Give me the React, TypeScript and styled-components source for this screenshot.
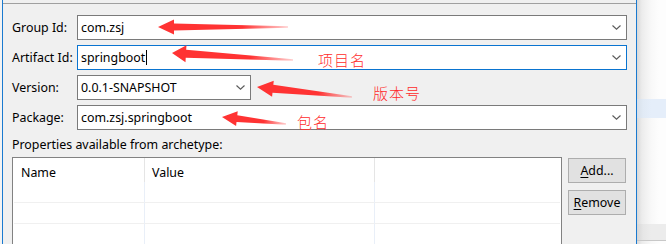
import React from 'react';
import styled, { createGlobalStyle } from 'styled-components';

const GlobalStyle = createGlobalStyle`
  html, body {
    margin: 0;
    padding: 0;
    background: #f3f3f3;
  }
  body {
    font-family: "Noto Sans", "Open Sans", sans-serif;
    font-size: 12.4px;
    color: #000;
  }
`;

const Page = styled.div`
  position: relative;
  width: 666px;
  height: 244px;
  overflow: hidden;
  display: flex;
  padding-left: 2px;
  box-sizing: border-box;
  background: #f3f3f3;
`;

const Dialog = styled.div`
  width: 635px;
  flex: none;
  display: flex;
  flex-direction: column;
  background: #f0f0f0;
  border-left: 1px solid #1a7ad0;
  border-right: 1px solid #1a7ad0;
  box-sizing: border-box;
`;

const TopRule = styled.div`
  height: 3px;
  border-bottom: 1px solid #a0a0a0;
  flex: none;
`;

const Content = styled.div`
  padding: 11px 9px 0 9px;
  display: flex;
  flex-direction: column;
`;

const Form = styled.div`
  display: grid;
  grid-template-columns: 65px 1fr;
  row-gap: 5px;
  align-items: center;
`;

const Label = styled.div`
  line-height: 16px;
  white-space: nowrap;
`;

const Combo = styled.div<{ $focused?: boolean; $width?: number }>`
  height: 25px;
  box-sizing: border-box;
  width: ${p => (p.$width ? `${p.$width}px` : '100%')};
  background: #fff;
  border: 1px solid ${p => (p.$focused ? '#0a74d0' : '#7a7a7a')};
  display: flex;
  align-items: center;
  padding: 0 5px 0 3px;
  white-space: nowrap;
`;

const ComboText = styled.span`
  flex: 1;
  display: flex;
  align-items: center;
`;

const Caret = styled.span`
  display: inline-block;
  width: 1px;
  height: 15px;
  background: #000;
  margin-left: 1px;
`;

const Chevron = () => (
  <svg width="9" height="5" viewBox="0 0 9 5">
    <polyline points="0.5,0.5 4.5,4.2 8.5,0.5" fill="none" stroke="#5a5a5a" strokeWidth="1.1" />
  </svg>
);

const SectionTitle = styled.div`
  margin-top: 7px;
  line-height: 16px;
`;

const TableArea = styled.div`
  margin-top: 4px;
  display: flex;
  gap: 6px;
`;

const Table = styled.div`
  width: 550px;
  height: 110px;
  box-sizing: border-box;
  background: #fff;
  border: 1px solid #828282;
  display: grid;
  grid-template-columns: 131px 230px 1fr;
  grid-template-rows: 24px repeat(4, 21px);
  padding: 0 1px;
`;

const HeadCell = styled.div<{ $divider?: boolean }>`
  display: flex;
  align-items: center;
  padding-left: 7px;
  padding-top: 4px;
  border-right: ${p => (p.$divider ? '1px solid #e5e5e5' : 'none')};
`;

const Cell = styled.div<{ $divider?: boolean }>`
  border-bottom: 1px solid #f0f0f0;
  border-right: ${p => (p.$divider ? '1px solid #e9eff8' : 'none')};
`;

const Buttons = styled.div`
  display: flex;
  flex-direction: column;
  gap: 7px;
  margin-top: 1px;
`;

const Button = styled.button`
  width: 58px;
  height: 25px;
  box-sizing: border-box;
  background: #e1e1e1;
  border: 1px solid #adadad;
  font-family: inherit;
  font-size: 12.4px;
  color: #000;
  padding: 0;
  u {
    text-underline-offset: 2px;
  }
`;

const RightPane = styled.div`
  flex: 1;
  display: flex;
  flex-direction: column;
  background: linear-gradient(90deg, #d9d9d9 0px, #ececec 5px, #f8f8f8 14px, #fdfdfd 22px);
`;

const Spacer = styled.div<{ $h: number }>`
  height: ${p => p.$h}px;
  flex: none;
`;

const HighlightBand = styled.div`
  height: 19px;
  flex: none;
  background: linear-gradient(90deg, #d7dfe9 0px, #e1eaf5 6px, #e5eefa 14px);
`;

const BottomBand = styled.div`
  height: 16px;
  flex: none;
  background: linear-gradient(90deg, #d6d6d6 0px, #e6e6e6 6px, #ececec 14px);
  border-bottom: 1px solid #c8c8c8;
`;

const Overlay = styled.svg`
  position: absolute;
  left: 0;
  top: 0;
  pointer-events: none;
`;

const Note = styled.div<{ $x: number; $y: number }>`
  position: absolute;
  left: ${p => p.$x}px;
  top: ${p => p.$y}px;
  font-family: "Noto Sans CJK SC", sans-serif;
  font-size: 15px;
  font-weight: 300;
  line-height: 18px;
  color: #ff2b2b;
  letter-spacing: 1px;
  pointer-events: none;
`;

type ArrowSpec = { tip: [number, number]; end: [number, number]; head?: number; half?: number; tail?: number };

const arrows: ArrowSpec[] = [
  { tip: [158, 27], end: [288, 27], head: 16, half: 7.5, tail: 3.5 },
  { tip: [172, 53], end: [293, 60], head: 14, half: 8.5, tail: 4 },
  { tip: [257, 87], end: [352, 97], head: 16, half: 8, tail: 4 },
  { tip: [222, 117], end: [286, 124], head: 15, half: 7.5, tail: 3.5 },
];

function arrowPoints(a: ArrowSpec) {
  const [tx, ty] = a.tip;
  const [ex, ey] = a.end;
  const head = a.head ?? 15;
  const half = a.half ?? 8;
  const tail = a.tail ?? 3.5;
  const dx = ex - tx;
  const dy = ey - ty;
  const len = Math.hypot(dx, dy);
  const ux = dx / len;
  const uy = dy / len;
  const nx = -uy;
  const ny = ux;
  const bx = tx + ux * head;
  const by = ty + uy * head;
  const pts = [
    [tx, ty],
    [bx + nx * half, by + ny * half],
    [bx + nx * tail, by + ny * tail],
    [ex + nx * 0.8, ey + ny * 0.8],
    [ex - nx * 0.8, ey - ny * 0.8],
    [bx - nx * tail, by - ny * tail],
    [bx - nx * half, by - ny * half],
  ];
  return pts.map(p => p.join(',')).join(' ');
}

const Arrows = () => (
  <Overlay width="666" height="244" viewBox="0 0 666 244">
    <defs>
      {arrows.map((a, i) => (
        <linearGradient
          key={i}
          id={`arrowFade${i}`}
          gradientUnits="userSpaceOnUse"
          x1={a.tip[0]}
          y1={a.tip[1]}
          x2={a.end[0]}
          y2={a.end[1]}
        >
          <stop offset="0" stopColor="#ff3333" stopOpacity="1" />
          <stop offset="0.65" stopColor="#ff3333" stopOpacity="1" />
          <stop offset="1" stopColor="#ff4040" stopOpacity="0.25" />
        </linearGradient>
      ))}
    </defs>
    {arrows.map((a, i) => (
      <polygon key={i} points={arrowPoints(a)} fill={`url(#arrowFade${i})`} />
    ))}
  </Overlay>
);

export default function App() {
  const rows = [0, 1, 2, 3];
  return (
    <>
      <GlobalStyle />
      <Page>
        <Dialog>
          <TopRule />
          <Content>
            <Form>
              <Label>Group Id:</Label>
              <Combo>
                <ComboText>com.zsj</ComboText>
                <Chevron />
              </Combo>
              <Label>Artifact Id:</Label>
              <Combo $focused>
                <ComboText>
                  springboot
                  <Caret />
                </ComboText>
                <Chevron />
              </Combo>
              <Label>Version:</Label>
              <Combo $width={174}>
                <ComboText>0.0.1-SNAPSHOT</ComboText>
                <Chevron />
              </Combo>
              <Label>Package:</Label>
              <Combo>
                <ComboText>com.zsj.springboot</ComboText>
                <Chevron />
              </Combo>
            </Form>
            <SectionTitle>Properties available from archetype:</SectionTitle>
            <TableArea>
              <Table>
                <HeadCell $divider>Name</HeadCell>
                <HeadCell $divider>Value</HeadCell>
                <HeadCell />
                {rows.map(r => (
                  <React.Fragment key={r}>
                    <Cell $divider />
                    <Cell $divider />
                    <Cell />
                  </React.Fragment>
                ))}
              </Table>
              <Buttons>
                <Button>
                  <u>A</u>dd...
                </Button>
                <Button>
                  <u>R</u>emove
                </Button>
              </Buttons>
            </TableArea>
          </Content>
        </Dialog>
        <RightPane>
          <Spacer $h={99} />
          <HighlightBand />
          <Spacer $h={106} />
          <BottomBand />
        </RightPane>
        <Arrows />
        <Note $x={318} $y={51}>项目名</Note>
        <Note $x={373} $y={84}>版本号</Note>
        <Note $x={297} $y={113}>包名</Note>
      </Page>
    </>
  );
}
